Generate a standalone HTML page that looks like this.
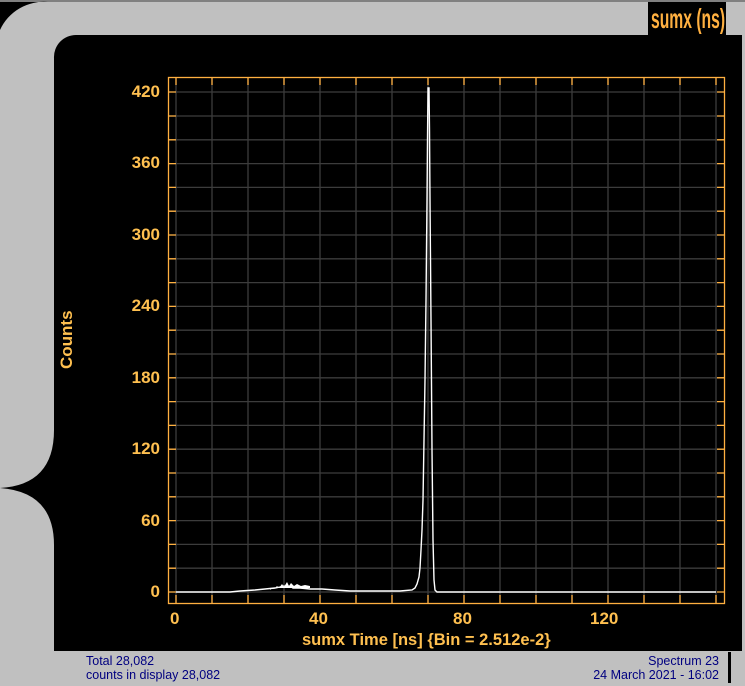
<!DOCTYPE html>
<html><head><style>
body{margin:0;width:745px;height:686px;overflow:hidden;background:#c0c0c0;position:relative;font-family:"Liberation Sans",sans-serif}
</style></head><body>
<svg width="745" height="686" style="position:absolute;left:0;top:0">
<rect x="0" y="0" width="745" height="686" fill="#c0c0c0"/>
<rect x="0" y="0" width="745" height="2" fill="#808080"/>
<path d="M0 2 H48 A48 48 0 0 0 0 30 Z" fill="#000"/>
<path d="M54 58 A22 22 0 0 1 76 35 H742 V651 H54 Z" fill="#000"/>
<path d="M54 430 Q54 485 0 488 Q54 492 54 545 Z" fill="#000"/>
<rect x="648" y="2" width="78" height="33" fill="#000"/>
<path d="M726 2 A19 16 0 0 1 726 35 Z" fill="#c0c0c0"/>
<rect x="40" y="652" width="688" height="31" fill="#c0c0c0"/>
<rect x="728" y="652" width="3" height="31" fill="#000"/>
<path d="M731 652 A14 18 0 0 1 731 683 Z" fill="#c0c0c0"/>
<rect x="0" y="683" width="745" height="3" fill="#c0c0c0"/>
<g stroke="#3c3c3c" stroke-width="1.3">
<line x1="176" y1="77" x2="176" y2="603"/><line x1="212" y1="77" x2="212" y2="603"/><line x1="248" y1="77" x2="248" y2="603"/><line x1="284" y1="77" x2="284" y2="603"/><line x1="320" y1="77" x2="320" y2="603"/><line x1="356" y1="77" x2="356" y2="603"/><line x1="392" y1="77" x2="392" y2="603"/><line x1="428" y1="77" x2="428" y2="603"/><line x1="464" y1="77" x2="464" y2="603"/><line x1="500" y1="77" x2="500" y2="603"/><line x1="536" y1="77" x2="536" y2="603"/><line x1="572" y1="77" x2="572" y2="603"/><line x1="608" y1="77" x2="608" y2="603"/><line x1="644" y1="77" x2="644" y2="603"/><line x1="680" y1="77" x2="680" y2="603"/><line x1="716" y1="77" x2="716" y2="603"/>
<line x1="168" y1="592" x2="725" y2="592"/><line x1="168" y1="568.2" x2="725" y2="568.2"/><line x1="168" y1="544.4" x2="725" y2="544.4"/><line x1="168" y1="520.6" x2="725" y2="520.6"/><line x1="168" y1="496.8" x2="725" y2="496.8"/><line x1="168" y1="473" x2="725" y2="473"/><line x1="168" y1="449.2" x2="725" y2="449.2"/><line x1="168" y1="425.4" x2="725" y2="425.4"/><line x1="168" y1="401.6" x2="725" y2="401.6"/><line x1="168" y1="377.8" x2="725" y2="377.8"/><line x1="168" y1="354" x2="725" y2="354"/><line x1="168" y1="330.2" x2="725" y2="330.2"/><line x1="168" y1="306.4" x2="725" y2="306.4"/><line x1="168" y1="282.6" x2="725" y2="282.6"/><line x1="168" y1="258.8" x2="725" y2="258.8"/><line x1="168" y1="235" x2="725" y2="235"/><line x1="168" y1="211.2" x2="725" y2="211.2"/><line x1="168" y1="187.4" x2="725" y2="187.4"/><line x1="168" y1="163.6" x2="725" y2="163.6"/><line x1="168" y1="139.8" x2="725" y2="139.8"/><line x1="168" y1="116" x2="725" y2="116"/><line x1="168" y1="92" x2="725" y2="92"/>
</g>
<rect x="168.5" y="77.5" width="556" height="526" fill="none" stroke="#ffb040" stroke-width="1.3"/>
<g stroke="#ffb040" stroke-width="1.3">
<path d="M176 77v8M212 77v8M248 77v8M284 77v8M320 77v8M356 77v8M392 77v8M428 77v8M464 77v8M500 77v8M536 77v8M572 77v8M608 77v8M644 77v8M680 77v8M716 77v8"/>
<path d="M176 603v-8M212 603v-8M248 603v-8M284 603v-8M320 603v-8M356 603v-8M392 603v-8M428 603v-8M464 603v-8M500 603v-8M536 603v-8M572 603v-8M608 603v-8M644 603v-8M680 603v-8M716 603v-8"/>
<path d="M168 592h8M168 568.2h8M168 544.4h8M168 520.6h8M168 496.8h8M168 473h8M168 449.2h8M168 425.4h8M168 401.6h8M168 377.8h8M168 354h8M168 330.2h8M168 306.4h8M168 282.6h8M168 258.8h8M168 235h8M168 211.2h8M168 187.4h8M168 163.6h8M168 139.8h8M168 116h8M168 92h8"/>
<path d="M725 592h-8M725 568.2h-8M725 544.4h-8M725 520.6h-8M725 496.8h-8M725 473h-8M725 449.2h-8M725 425.4h-8M725 401.6h-8M725 377.8h-8M725 354h-8M725 330.2h-8M725 306.4h-8M725 282.6h-8M725 258.8h-8M725 235h-8M725 211.2h-8M725 187.4h-8M725 163.6h-8M725 139.8h-8M725 116h-8M725 92h-8"/>
</g>
<path d="M176 592 H230 L240 591 L255 590 L265 589 L275 588 L280 587 L284 586 L287 587 L290 586 L293 588 L300 588 L310 589 L322 589 L335 590 L350 591 L400 591 L412 590 L415 588 L417 584 L419 577 L420 568 L421 550 L422 530 L423 500 L424 440 L425 380 L426 300 L427 200 L427.5 140 L428 88 L429 88 L429.5 130 L430 200 L431 320 L432 450 L433 540 L434 580 L435 590 L437 592 H716" fill="none" stroke="#fff" stroke-width="1.4"/>
<path d="M270 590 l2-2 l2 1 l3-3 l2 2 l3-4 l2 3 l3-5 l2 4 l2-3 l3 3 l3-2 l4 2 l4-1 l5 1 v2 h-40z" fill="#fff"/>
</svg>
<div style="position:absolute;left:0;top:0;width:745px;height:686px;color:#ffc050;font-weight:bold;font-size:17px">
<div style="position:absolute;right:585px;top:83px;line-height:18px">420</div>
<div style="position:absolute;right:585px;top:154px;line-height:18px">360</div>
<div style="position:absolute;right:585px;top:226px;line-height:18px">300</div>
<div style="position:absolute;right:585px;top:297px;line-height:18px">240</div>
<div style="position:absolute;right:585px;top:369px;line-height:18px">180</div>
<div style="position:absolute;right:585px;top:440px;line-height:18px">120</div>
<div style="position:absolute;right:585px;top:512px;line-height:18px">60</div>
<div style="position:absolute;right:585px;top:583px;line-height:18px">0</div>
<div style="position:absolute;left:170px;top:610px;line-height:18px">0</div>
<div style="position:absolute;left:309px;top:610px;line-height:18px">40</div>
<div style="position:absolute;left:453px;top:610px;line-height:18px">80</div>
<div style="position:absolute;left:590px;top:610px;line-height:18px">120</div>
<div style="position:absolute;left:302px;top:631px;line-height:18px;font-size:16.5px">sumx Time [ns] {Bin = 2.512e-2}</div>
<div style="position:absolute;left:38px;top:331px;line-height:18px;transform:rotate(-90deg);transform-origin:center;width:58px;text-align:center">Counts</div>
<div style="position:absolute;left:651px;top:2px;font-size:28px;line-height:33px;transform:scaleX(0.56);transform-origin:left;white-space:nowrap;color:#ffb040">sumx (ns)</div>
</div>
<div style="position:absolute;left:86px;top:654px;color:#000080;font-size:12.5px;line-height:14px">Total 28,082<br>counts in display 28,082</div>
<div style="position:absolute;right:26px;top:654px;color:#000080;font-size:12.5px;line-height:14px;text-align:right">Spectrum 23<br>24 March 2021 - 16:02</div>
</body></html>
